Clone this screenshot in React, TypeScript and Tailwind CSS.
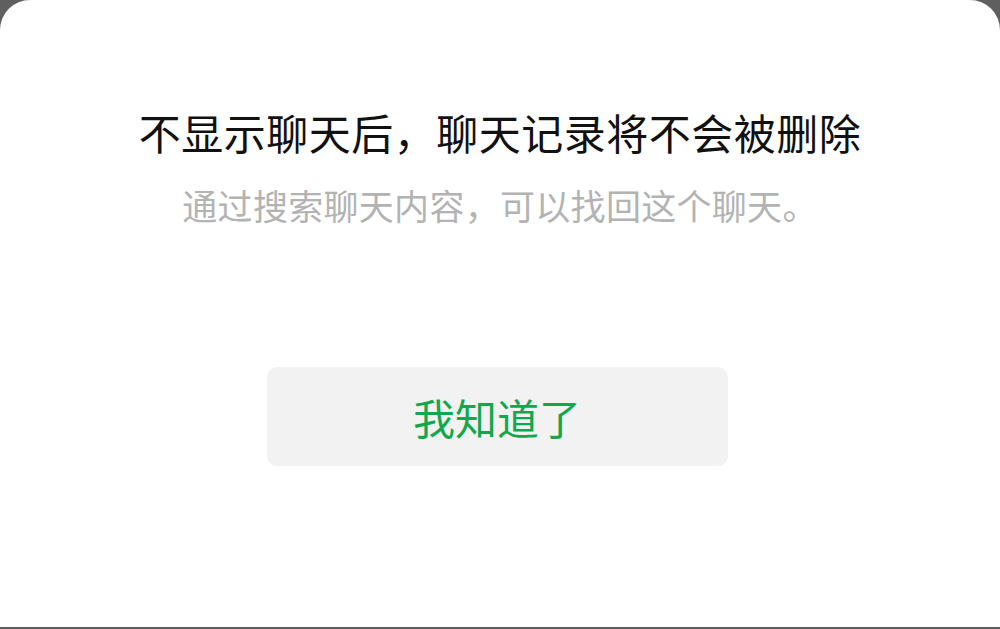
import React from 'react';

const App: React.FC = () => {
  return (
    <div className="w-full h-[629px] bg-[#5f5f5f] overflow-hidden">
      <div
        className="h-[627px] bg-white rounded-t-[30px] flex flex-col items-center"
        style={{ fontFamily: '"Noto Sans CJK SC", "Noto Sans", sans-serif' }}
      >
        <h1 className="mt-[107px] text-[42px] leading-[50px] text-[#111111] font-normal tracking-[0.5px]">
          不显示聊天后，聊天记录将不会被删除
        </h1>
        <p className="mt-[27px] text-[35px] leading-[42px] text-[#b3b3b3] tracking-[0.3px]">
          通过搜索聊天内容，可以找回这个聊天。
        </p>
        <button className="mt-[141px] mr-[6px] w-[461px] h-[99px] rounded-[10px] bg-[#f2f2f2] text-[42px] text-[#11a84d] flex items-center justify-center">
          我知道了
        </button>
      </div>
    </div>
  );
};

export default App;
